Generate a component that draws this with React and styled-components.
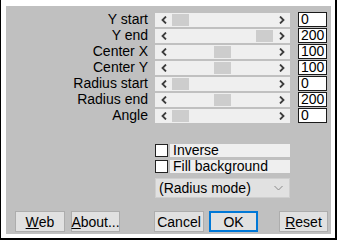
import React from 'react'
import styled, { createGlobalStyle } from 'styled-components'

const GlobalStyle = createGlobalStyle`
  html, body {
    margin: 0;
    padding: 0;
    background: #ffffff;
  }
  body {
    font-family: "Liberation Sans Narrow", "Liberation Sans", Arial, sans-serif;
    font-size: 14px;
    color: #000000;
  }
`

const sliders = [
  { label: 'Y start', value: 0, max: 200 },
  { label: 'Y end', value: 200, max: 200 },
  { label: 'Center X', value: 100, max: 200 },
  { label: 'Center Y', value: 100, max: 200 },
  { label: 'Radius start', value: 0, max: 400 },
  { label: 'Radius end', value: 200, max: 400 },
  { label: 'Angle', value: 0, max: 360 },
]

const TRACK = 135
const ARROW = 17
const THUMB = 17

const Slider = ({ value, max }) => {
  const left = ARROW + (value / max) * (TRACK - ARROW * 2 - THUMB)
  return (
    <Track>
      <ArrowButton>
        <svg width="6" height="8" viewBox="0 0 6 8">
          <polyline points="5,0.5 1.5,4 5,7.5" fill="none" stroke="#3c3c3c" strokeWidth="1.8" />
        </svg>
      </ArrowButton>
      <Thumb style={{ left }} />
      <ArrowButton $right>
        <svg width="6" height="8" viewBox="0 0 6 8">
          <polyline points="1,0.5 4.5,4 1,7.5" fill="none" stroke="#3c3c3c" strokeWidth="1.8" />
        </svg>
      </ArrowButton>
    </Track>
  )
}

const Check = ({ label }) => (
  <CheckRow>
    <CheckBox />
    <CheckLabel>{label}</CheckLabel>
  </CheckRow>
)

const App = () => (
  <>
    <GlobalStyle />
    <Frame>
      <Panel>
        <Rows>
          {sliders.map((s) => (
            <Row key={s.label}>
              <Label>{s.label}</Label>
              <Slider value={s.value} max={s.max} />
              <ValueBox>{s.value}</ValueBox>
            </Row>
          ))}
        </Rows>
        <Options>
          <Check label="Inverse" />
          <Check label="Fill background" />
          <Select>
            <span>(Radius mode)</span>
            <svg width="9" height="6" viewBox="0 0 9 6">
              <polyline points="0.5,1 4.5,5 8.5,1" fill="none" stroke="#8a8a8a" strokeWidth="1" />
            </svg>
          </Select>
        </Options>
        <Buttons>
          <Group>
            <Button><u>W</u>eb</Button>
            <Button $w={49}><u>A</u>bout...</Button>
          </Group>
          <Group $ml={34}>
            <Button>Cancel</Button>
            <Button $w={49} $default>OK</Button>
          </Group>
          <Group $ml={21}>
            <Button $w={49}><u>R</u>eset</Button>
          </Group>
        </Buttons>
      </Panel>
    </Frame>
  </>
)

const Frame = styled.div`
  width: 337px;
  height: 240px;
  box-sizing: border-box;
  border-left: 1px solid #000;
  border-right: 2px solid #000;
  border-bottom: 2px solid #000;
  padding: 6px 4px 4px 5px;
  background: #ffffff;
`

const Panel = styled.div`
  height: 100%;
  background: #c0c0c0;
  display: flex;
  flex-direction: column;
`

const Rows = styled.div`
  display: flex;
  flex-direction: column;
  gap: 1px;
  padding-top: 6px;
`

const Row = styled.div`
  display: flex;
  align-items: center;
  height: 15px;
`

const Label = styled.div`
  width: 142px;
  text-align: right;
  line-height: 15px;
  white-space: nowrap;
`

const Track = styled.div`
  position: relative;
  margin-left: 7px;
  width: ${TRACK}px;
  height: 14px;
  background: #efefef;
  display: flex;
  justify-content: space-between;
`

const ArrowButton = styled.div`
  width: ${ARROW}px;
  height: 14px;
  display: flex;
  align-items: center;
  justify-content: center;
`

const Thumb = styled.div`
  position: absolute;
  top: 1px;
  width: ${THUMB}px;
  height: 12px;
  background: #cdcdcd;
`

const ValueBox = styled.div`
  margin-left: 8px;
  width: 29px;
  height: 15px;
  box-sizing: border-box;
  border: 1px solid #1a1a1a;
  background: #ffffff;
  padding-left: 2px;
  line-height: 13px;
`

const Options = styled.div`
  display: flex;
  flex-direction: column;
  margin-top: 21px;
  margin-left: 149px;
  width: 135px;
  gap: 3px;
`

const CheckRow = styled.div`
  display: flex;
  height: 13px;
`

const CheckBox = styled.div`
  width: 13px;
  height: 13px;
  box-sizing: border-box;
  border: 1px solid #222;
  background: #ffffff;
`

const CheckLabel = styled.div`
  flex: 1;
  margin-left: 2px;
  background: #efefef;
  padding-left: 3px;
  line-height: 13px;
`

const Select = styled.div`
  margin-top: 2px;
  height: 20px;
  box-sizing: border-box;
  background: #e1e1e1;
  border: 1px solid #cfcfcf;
  display: flex;
  align-items: center;
  justify-content: space-between;
  padding: 0 6px 0 3px;
`

const Buttons = styled.div`
  display: flex;
  margin-top: 13px;
  padding-left: 9px;
`

const Group = styled.div`
  display: flex;
  gap: 5px;
  margin-left: ${(p) => p.$ml || 0}px;
  &:first-child {
    gap: 6px;
  }
`

const Button = styled.div`
  width: ${(p) => p.$w || 50}px;
  height: 21px;
  box-sizing: border-box;
  background: #e1e1e1;
  border: ${(p) => (p.$default ? '2px solid #0078d7' : '1px solid #adadad')};
  display: flex;
  align-items: center;
  justify-content: center;
  u {
    text-decoration: underline;
  }
`

export default App
